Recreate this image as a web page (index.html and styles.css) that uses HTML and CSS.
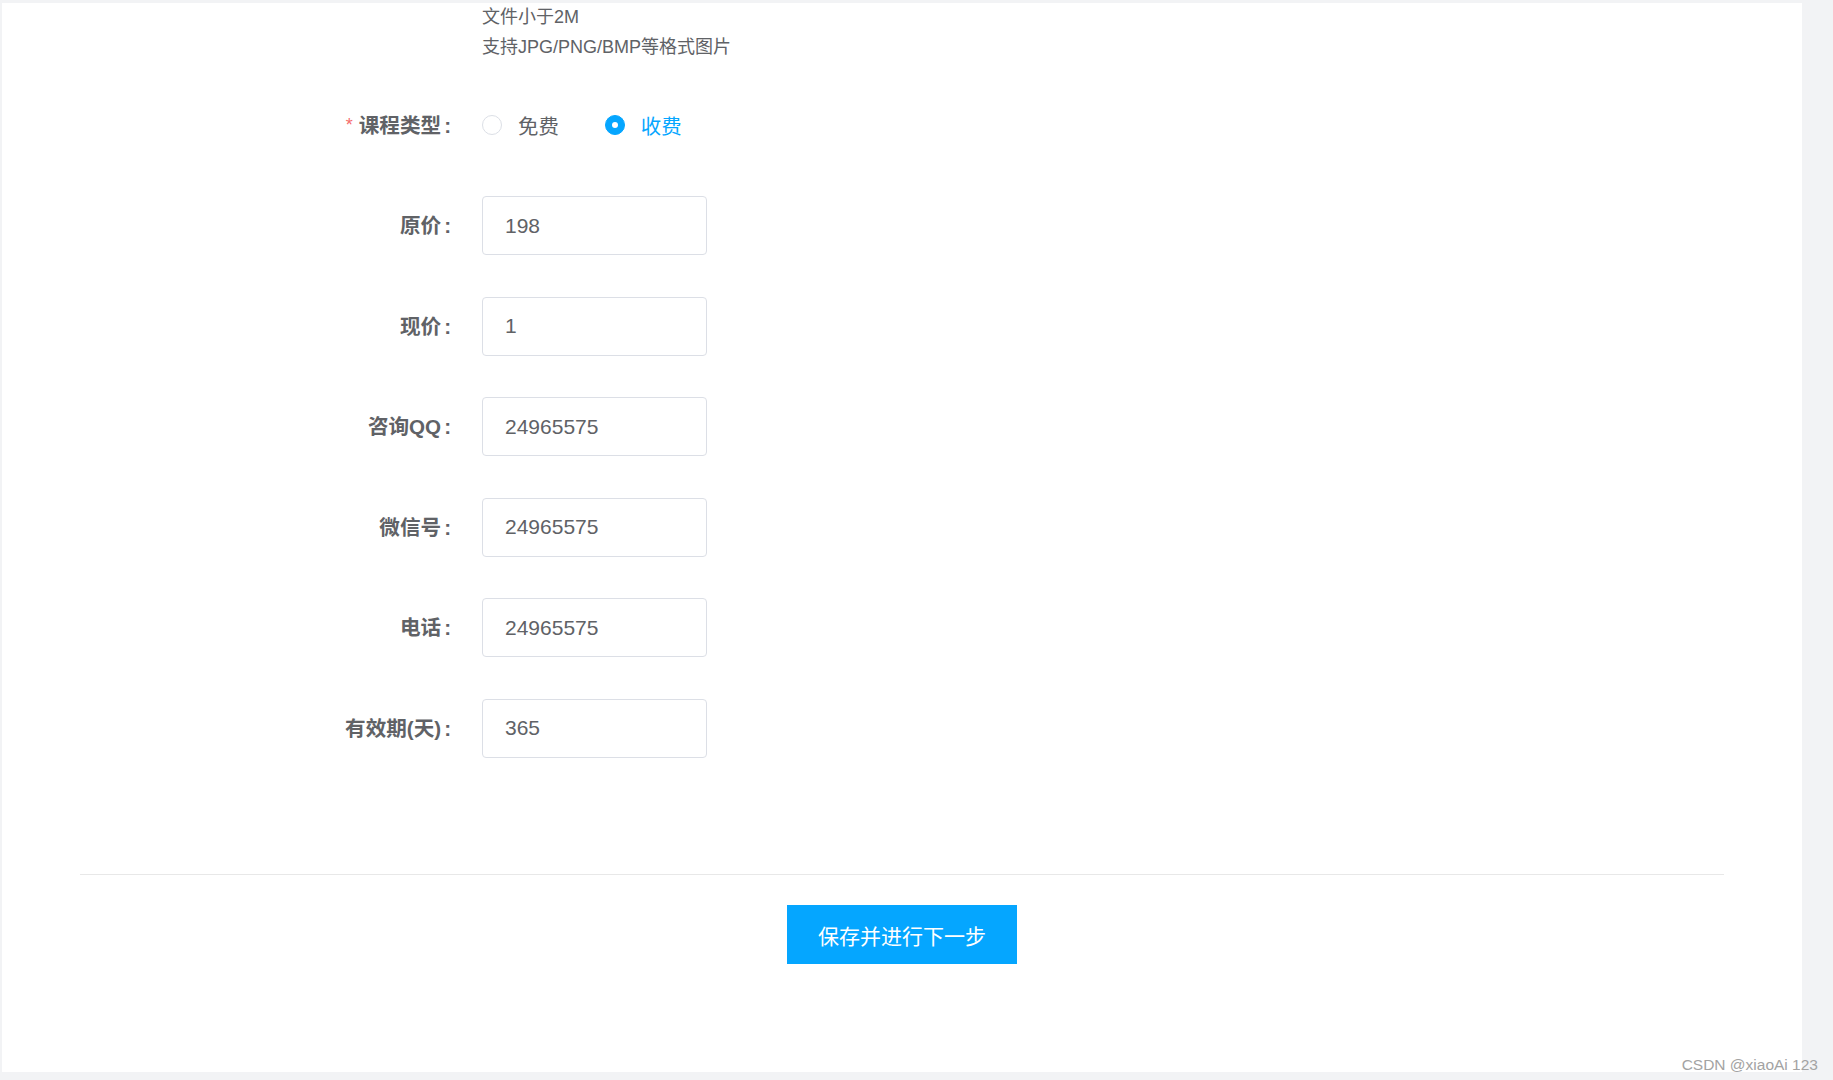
FILE: index.html
```html
<!DOCTYPE html>
<html lang="zh-CN">
<head>
<meta charset="utf-8">
<title>课程设置</title>
<link rel="stylesheet" href="styles.css">
</head>
<body>
<div class="page">
  <div class="panel">
    <form class="form">
      <div class="form-item tips-item">
        <div class="label"></div>
        <div class="content tips">
          <div>文件小于2M</div>
          <div>支持JPG/PNG/BMP等格式图片</div>
        </div>
      </div>

      <div class="form-item">
        <div class="label"><span class="req">*</span>课程类型<span class="colon">:</span></div>
        <div class="content radios">
          <label class="radio"><span class="dot"></span><span class="radio-text">免费</span></label>
          <label class="radio checked"><span class="dot"></span><span class="radio-text">收费</span></label>
        </div>
      </div>

      <div class="form-item">
        <div class="label">原价<span class="colon">:</span></div>
        <div class="content"><input class="input" type="text" value="198"></div>
      </div>

      <div class="form-item">
        <div class="label">现价<span class="colon">:</span></div>
        <div class="content"><input class="input" type="text" value="1"></div>
      </div>

      <div class="form-item">
        <div class="label">咨询QQ<span class="colon">:</span></div>
        <div class="content"><input class="input" type="text" value="24965575"></div>
      </div>

      <div class="form-item">
        <div class="label">微信号<span class="colon">:</span></div>
        <div class="content"><input class="input" type="text" value="24965575"></div>
      </div>

      <div class="form-item">
        <div class="label">电话<span class="colon">:</span></div>
        <div class="content"><input class="input" type="text" value="24965575"></div>
      </div>

      <div class="form-item">
        <div class="label">有效期(天)<span class="colon">:</span></div>
        <div class="content"><input class="input" type="text" value="365"></div>
      </div>

      <div class="divider"></div>

      <div class="actions">
        <button type="button" class="btn-primary">保存并进行下一步</button>
      </div>
    </form>
  </div>
  <div class="watermark">CSDN @xiaoAi 123</div>
</div>
</body>
</html>
```

FILE: styles.css
```css
* { box-sizing: border-box; }

html, body {
  margin: 0;
  padding: 0;
  background: #f2f3f5;
  font-family: "Liberation Sans", "Noto Sans CJK SC", sans-serif;
  color: #606266;
}

.page {
  position: relative;
  width: 1833px;
  height: 1080px;
  padding: 3px 31px 8px 2px;
  overflow: hidden;
}

.panel {
  background: #ffffff;
  height: 100%;
}

.form {
  margin: 0;
  display: flex;
  flex-direction: column;
}

.form-item {
  display: flex;
  align-items: center;
  height: 59px;
  margin-top: 41.5px;
}

.tips-item {
  height: auto;
  margin-top: -1px;
  margin-bottom: -8px;
  align-items: flex-start;
}

.tips-item + .form-item {
  margin-top: 41.5px;
}

.label {
  flex: 0 0 480px;
  width: 480px;
  padding-right: 31px;
  text-align: right;
  font-size: 20.6px;
  font-weight: bold;
  color: #606266;
  line-height: 59px;
  white-space: nowrap;
}

.tips-item .label { line-height: 30px; }

.colon { margin-left: 3px; }

.req {
  color: #f56c6c;
  font-weight: normal;
  font-size: 18px;
  margin-right: 6px;
  vertical-align: 2px;
}

.content {
  display: flex;
  align-items: center;
}

.tips {
  flex-direction: column;
  align-items: flex-start;
  font-size: 18px;
  line-height: 30px;
  color: #606266;
}

.radios { gap: 46px; }

.radio {
  display: flex;
  align-items: center;
  font-size: 20.4px;
  color: #606266;
  cursor: pointer;
}

.dot {
  width: 20px;
  height: 20px;
  border-radius: 50%;
  border: 1px solid #dcdfe6;
  background: #fff;
  margin-right: 16px;
  display: flex;
  align-items: center;
  justify-content: center;
}

.radio.checked { color: #05a6ff; }

.radio.checked .dot {
  background: #05a6ff;
  border-color: #05a6ff;
}

.radio.checked .dot::after {
  content: "";
  width: 6px;
  height: 6px;
  border-radius: 50%;
  background: #fff;
}

.input {
  width: 225px;
  height: 59px;
  border: 1px solid #dcdfe6;
  border-radius: 4px;
  padding: 0 22px;
  font-family: "Liberation Sans", "Noto Sans CJK SC", sans-serif;
  font-size: 21px;
  color: #606266;
  background: #fff;
  outline: none;
}

.divider {
  height: 1px;
  background: #e8e8e8;
  margin: 116.5px 78px 0 78px;
}

.actions {
  display: flex;
  justify-content: center;
  margin-top: 30px;
}

.btn-primary {
  width: 230px;
  height: 59px;
  border: none;
  background: #05a6ff;
  color: #ffffff;
  font-family: "Liberation Sans", "Noto Sans CJK SC", sans-serif;
  font-size: 21px;
  cursor: pointer;
}

.watermark {
  position: absolute;
  right: 15px;
  bottom: 6px;
  font-size: 15.5px;
  color: #a3a3a3;
  line-height: 18px;
}
```
